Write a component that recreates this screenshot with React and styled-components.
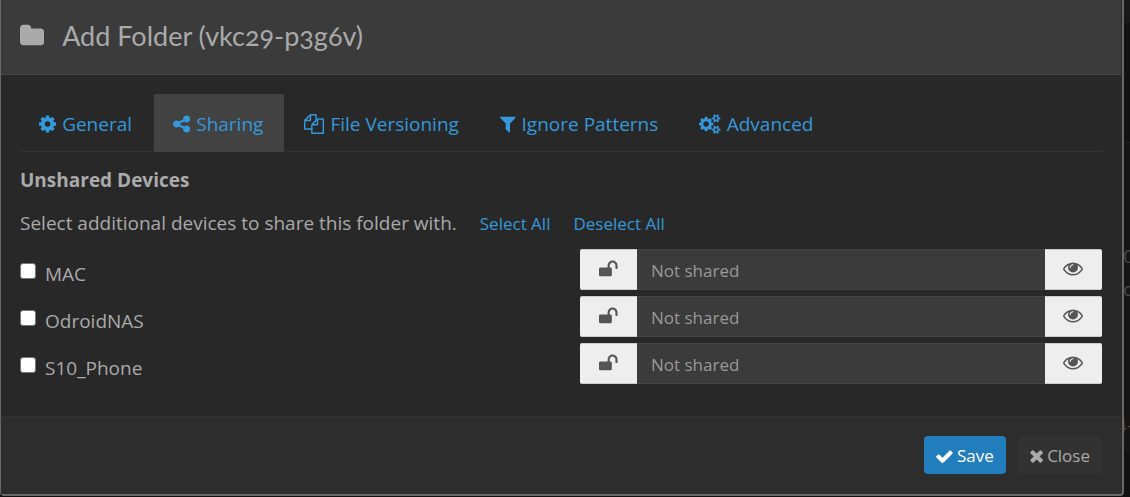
import React from 'react';
import styled, { createGlobalStyle } from 'styled-components';

const GlobalStyle = createGlobalStyle`
  * { box-sizing: border-box; }
  body {
    margin: 0;
    background: #111111;
    color: #aaaaaa;
    font-family: "Open Sans", "Liberation Sans", sans-serif;
    font-size: 19px;
    line-height: 28px;
  }
  button, input { font: inherit; }
`;

const Page = styled.div`
  position: relative;
  overflow: hidden;
  padding-right: 6px;
  padding-bottom: 1px;
`;

const Backdrop = styled.div`
  position: absolute;
  inset: 0;
  overflow: hidden;
  color: #4a4743;
`;

const BackdropPanel = styled.div`
  position: absolute;
  left: 0;
  right: 0;
  top: ${(p) => p.$top}px;
  height: ${(p) => p.$height}px;
  border-top: 1px solid #222222;
  background: ${(p) => p.$tone};
`;

const BackdropText = styled.span`
  position: absolute;
  top: ${(p) => p.$top}px;
  right: ${(p) => p.$right}px;
`;

const Dialog = styled.section`
  position: relative;
  border: solid #69676a;
  border-width: 0 2px 2px 1px;
  border-radius: 0 0 4px 4px;
  background: #282828;
`;

const Header = styled.header`
  display: flex;
  align-items: center;
  gap: 18px;
  height: 75px;
  margin-right: 1px;
  padding: 0 19px 3px;
  border-bottom: 1px solid #484848;
  background: #3b3b3b;
`;

const Title = styled.h1`
  margin: 0;
  font-family: Lato, sans-serif;
  font-feature-settings: "onum";
  font-weight: 400;
  font-size: 27px;
  line-height: 32px;
`;

const Body = styled.div`
  padding: 19px 20px 26px 19px;
`;

const Tabs = styled.nav`
  display: flex;
  gap: 1px;
  border-bottom: 1px solid #333333;
`;

const Tab = styled.a`
  display: flex;
  align-items: center;
  gap: 6px;
  height: ${(p) => (p.$active ? '58px' : '57px')};
  margin-bottom: ${(p) => (p.$active ? '-1px' : '0')};
  padding: 2px 21px 0 19px;
  border-radius: 2px 2px 0 0;
  background: ${(p) => (p.$active ? '#424242' : 'transparent')};
  color: #3498db;
  text-decoration: none;
  white-space: nowrap;
`;

const SectionTitle = styled.h2`
  margin: 14px 0 15px;
  font-size: 19px;
  line-height: 28px;
  font-weight: 700;
`;

const Hint = styled.p`
  display: flex;
  align-items: center;
  margin: 0 0 12px;
`;

const TextButton = styled.button`
  margin-left: 23px;
  padding: 2px 0 0;
  border: 0;
  background: none;
  color: #3498db;
  font-size: 17px;
  line-height: 26px;
`;

const DeviceRow = styled.div`
  display: grid;
  grid-template-columns: minmax(0, 560fr) minmax(0, 522fr);
  align-items: center;
  margin-bottom: 6px;
`;

const DeviceLabel = styled.label`
  display: flex;
  align-items: center;
  gap: 9px;
  padding-top: 8px;
`;

const Checkbox = styled.input`
  appearance: none;
  width: 16px;
  height: 16px;
  margin: 0 0 6px;
  border: 1px solid #767676;
  border-radius: 3px;
  background: #ffffff;
`;

const Group = styled.div`
  display: flex;
  height: 41px;
`;

const Addon = styled.button`
  display: flex;
  align-items: center;
  justify-content: center;
  flex: 0 0 57px;
  padding: 0 ${(p) => (p.$end ? '2px' : '0')} 2px 0;
  border: solid #cccccc;
  border-width: 1px 0;
  border-radius: ${(p) => (p.$end ? '0 2px 2px 0' : '2px 0 0 2px')};
  background: #eeeeee;
  color: #555555;
`;

const Password = styled.input`
  flex: 1;
  min-width: 0;
  padding: 2px 14px 0;
  border: 1px solid #444444;
  border-width: 1px 0;
  border-radius: 0;
  background: #3b3b3b;
  color: #aaaaaa;
  font-size: 17px;
  &::placeholder { color: #999999; opacity: 1; }
`;

const Footer = styled.footer`
  display: flex;
  justify-content: flex-end;
  gap: 12px;
  margin-right: 1px;
  padding: 19px 19px 20px;
  border-top: 1px solid #333333;
  background: #2d2d2d;
`;

const Button = styled.button`
  display: flex;
  align-items: center;
  gap: 4px;
  height: 38px;
  padding: 2px 12px 0;
  border: 0;
  border-radius: 4px;
  background: ${(p) => (p.$primary ? '#217dbb' : '#323232')};
  color: ${(p) => (p.$primary ? '#ffffff' : '#aaaaaa')};
  font-size: 17px;
`;

const Svg = styled.svg`
  display: block;
  flex: none;
  height: ${(p) => p.$size}px;
  fill: currentColor;
`;

const icons = {
  folder: ['64 0 1664 1792', 'M1728 608v704q0 92-66 158t-158 66h-1216q-92 0-158-66t-66-158v-960q0-92 66-158t158-66h320q92 0 158 66t66 158v32h672q92 0 158 66t66 158z'],
  cog: ['128 0 1536 1792', 'M1152 896q0-106-75-181t-181-75-181 75-75 181 75 181 181 75 181-75 75-181zm512-109v222q0 12-8 23t-20 13l-185 28q-19 54-39 91 35 50 107 138 10 12 10 25t-9 23q-27 37-99 108t-94 71q-12 0-26-9l-138-108q-44 23-91 38-16 136-29 186-7 28-36 28h-222q-14 0-24.5-8.5t-11.5-21.5l-28-184q-49-16-90-37l-141 107q-10 9-25 9-14 0-25-11-126-114-165-168-7-10-7-23 0-12 8-23 15-21 51-66.5t54-70.5q-27-50-41-99l-183-27q-13-2-21-12.5t-8-23.5v-222q0-12 8-23t19-13l186-28q14-46 39-92-40-57-107-138-10-12-10-24 0-10 9-23 26-36 98.5-107.5t94.5-71.5q13 0 26 10l138 107q44-23 91-38 16-136 29-186 7-28 36-28h222q14 0 24.5 8.5t11.5 21.5l28 184q49 16 90 37l142-107q9-9 24-9 13 0 25 10 129 119 165 170 7 8 7 22 0 12-8 23-15 21-51 66.5t-54 70.5q26 50 41 98l183 28q13 2 21 12.5t8 23.5z'],
  share: ['128 0 1536 1792', 'M1344 1024q133 0 226.5 93.5t93.5 226.5-93.5 226.5-226.5 93.5-226.5-93.5-93.5-226.5q0-12 2-34l-360-180q-92 86-218 86-133 0-226.5-93.5t-93.5-226.5 93.5-226.5 226.5-93.5q126 0 218 86l360-180q-2-22-2-34 0-133 93.5-226.5t226.5-93.5 226.5 93.5 93.5 226.5-93.5 226.5-226.5 93.5q-126 0-218-86l-360 180q2 22 2 34t-2 34l360 180q92-86 218-86z'],
  files: ['0 0 1792 1792', 'M1696 384q40 0 68 28t28 68v1216q0 40-28 68t-68 28h-960q-40 0-68-28t-28-68v-288h-544q-40 0-68-28t-28-68v-672q0-40 20-88t48-76l408-408q28-28 76-48t88-20h416q40 0 68 28t28 68v328q68-40 128-40h416zm-544 213l-299 299h299v-299zm-640-384l-299 299h299v-299zm196 647l316-316v-416h-384v416q0 40-28 68t-68 28h-416v640h512v-256q0-40 20-88t48-76zm956 804v-1152h-384v416q0 40-28 68t-68 28h-416v640h896z'],
  filter: ['192 0 1408 1792', 'M1595 295q17 41-14 70l-493 493v742q0 42-39 59-13 5-25 5-27 0-45-19l-256-256q-19-19-19-45v-486l-493-493q-31-29-14-70 17-39 59-39h1280q42 0 59 39z'],
  cogs: ['-64 0 1920 1792', 'M832 896q0-106-75-181t-181-75-181 75-75 181 75 181 181 75 181-75 75-181zm768 512q0-52-38-90t-90-38-90 38-38 90q0 53 37.5 90.5t90.5 37.5 90.5-37.5 37.5-90.5zm0-1024q0-52-38-90t-90-38-90 38-38 90q0 53 37.5 90.5t90.5 37.5 90.5-37.5 37.5-90.5zm-384 421v185q0 10-7 19.5t-16 10.5l-155 24q-11 35-32 76 34 48 90 115 7 11 7 20 0 12-7 19-23 30-82.5 89.5t-78.5 59.5q-11 0-21-7l-115-90q-37 19-77 31-11 108-23 155-7 24-30 24h-186q-11 0-20-7.5t-10-17.5l-23-153q-34-10-75-31l-118 89q-7 7-20 7-11 0-21-8-144-133-144-160 0-9 7-19 10-14 41-53t47-61q-23-44-35-82l-152-24q-10-1-17-9.5t-7-19.5v-185q0-10 7-19.5t16-10.5l155-24q11-35 32-76-34-48-90-115-7-11-7-20 0-12 7-20 22-30 82-89t79-59q11 0 21 7l115 90q34-18 77-32 11-108 23-154 7-24 30-24h186q11 0 20 7.5t10 17.5l23 153q34 10 75 31l118-89q8-7 20-7 11 0 21 8 144 133 144 160 0 8-7 19-12 16-42 54t-45 60q23 48 34 82l152 23q10 2 17 10.5t7 19.5zm640 533v140q0 16-149 31-12 27-30 52 51 113 51 138 0 4-4 7-122 71-124 71-8 0-46-47t-52-68q-20 2-30 2t-30-2q-14 21-52 68t-46 47q-2 0-124-71-4-3-4-7 0-25 51-138-18-25-30-52-149-15-149-31v-140q0-16 149-31 13-29 30-52-51-113-51-138 0-4 4-7 4-2 35-20t59-34 30-16q8 0 46 46.5t52 67.5q20-2 30-2t30 2q51-71 92-112l6-2q4 0 124 70 4 3 4 7 0 25-51 138 17 23 30 52 149 15 149 31zm0-1024v140q0 16-149 31-12 27-30 52 51 113 51 138 0 4-4 7-122 71-124 71-8 0-46-47t-52-68q-20 2-30 2t-30-2q-14 21-52 68t-46 47q-2 0-124-71-4-3-4-7 0-25 51-138-18-25-30-52-149-15-149-31v-140q0-16 149-31 13-29 30-52-51-113-51-138 0-4 4-7 4-2 35-20t59-34 30-16q8 0 46 46.5t52 67.5q20-2 30-2t30 2q51-71 92-112l6-2q4 0 124 70 4 3 4 7 0 25-51 138 17 23 30 52 149 15 149 31z'],
  unlock: ['64 0 1664 1792', 'M1728 576v256q0 26-19 45t-45 19h-64q-26 0-45-19t-19-45v-256q0-106-75-181t-181-75-181 75-75 181v192h96q40 0 68 28t28 68v576q0 40-28 68t-68 28h-960q-40 0-68-28t-28-68v-576q0-40 28-68t68-28h672v-192q0-185 131.5-316.5t316.5-131.5 316.5 131.5 131.5 316.5z'],
  eye: ['0 64 1792 1792', 'M1664 960q-152-236-381-353 61 104 61 225 0 185-131.5 316.5t-316.5 131.5-316.5-131.5-131.5-316.5q0-121 61-225-229 117-381 353 133 205 333.5 326.5t434.5 121.5 434.5-121.5 333.5-326.5zm-720-384q0-20-14-34t-34-14q-125 0-214.5 89.5t-89.5 214.5q0 20 14 34t34 14 34-14 14-34q0-86 61-147t147-61q20 0 34-14t14-34zm848 384q0 34-20 69-140 230-376.5 368.5t-499.5 138.5-499.5-139-376.5-368q-20-35-20-69t20-69q140-229 376.5-368t499.5-139 499.5 139 376.5 368q20 35 20 69z'],
  check: ['100 0 1600 1792', 'M1671 566q0 40-28 68l-724 724-136 136q-28 28-68 28t-68-28l-136-136-362-362q-28-28-28-68t28-68l136-136q28-28 68-28t68 28l294 295 656-657q28-28 68-28t68 28l136 136q28 28 28 68z'],
  times: ['270 64 1256 1792', 'M1490 1322q0 40-28 68l-136 136q-28 28-68 28t-68-28l-294-294-294 294q-28 28-68 28t-68-28l-136-136q-28-28-28-68t28-68l294-294-294-294q-28-28-28-68t28-68l136-136q28-28 68-28t68 28l294 294 294-294q28-28 68-28t68 28l136 136q28 28 28 68t-28 68l-294 294 294 294q28 28 28 68z'],
};

function Icon({ name, size = 20 }) {
  const [viewBox, d] = icons[name];
  return (
    <Svg viewBox={viewBox} $size={size} aria-hidden="true">
      <path d={d} />
    </Svg>
  );
}

const tabs = [
  { icon: 'cog', label: 'General' },
  { icon: 'share', label: 'Sharing', active: true },
  { icon: 'files', label: 'File Versioning' },
  { icon: 'filter', label: 'Ignore Patterns' },
  { icon: 'cogs', label: 'Advanced' },
];

const devices = ['MAC', 'OdroidNAS', 'S10_Phone'];

export default function App() {
  return (
    <Page>
      <GlobalStyle />
      <Backdrop aria-hidden="true">
        <BackdropPanel $top={-1} $height={24} $tone="#191919" />
        <BackdropPanel $top={142} $height={309} $tone="#151515" />
        <BackdropText $top={242} $right={-4}>0</BackdropText>
        <BackdropText $top={275} $right={-2}>oc</BackdropText>
        <BackdropText $top={411} $right={-3}>4-</BackdropText>
      </Backdrop>
      <Dialog role="dialog" aria-labelledby="dialog-title">
        <Header>
          <Icon name="folder" size={26} />
          <Title id="dialog-title">Add Folder (vkc29-p3g6v)</Title>
        </Header>
        <Body>
          <Tabs>
            {tabs.map((t) => (
              <Tab key={t.label} href="#" $active={t.active} aria-current={t.active ? 'page' : undefined}>
                <Icon name={t.icon} />
                {t.label}
              </Tab>
            ))}
          </Tabs>
          <SectionTitle>Unshared Devices</SectionTitle>
          <Hint>
            Select additional devices to share this folder with.
            <TextButton type="button">Select All</TextButton>
            <TextButton type="button">Deselect All</TextButton>
          </Hint>
          {devices.map((name) => (
            <DeviceRow key={name}>
              <DeviceLabel>
                <Checkbox type="checkbox" />
                {name}
              </DeviceLabel>
              <Group>
                <Addon type="button" aria-label="Encryption"><Icon name="unlock" /></Addon>
                <Password type="text" placeholder="Not shared" aria-label={`Encryption password for ${name}`} />
                <Addon type="button" $end aria-label="Show password"><Icon name="eye" /></Addon>
              </Group>
            </DeviceRow>
          ))}
        </Body>
        <Footer>
          <Button type="button" $primary><Icon name="check" size={19} />Save</Button>
          <Button type="button"><Icon name="times" size={19} />Close</Button>
        </Footer>
      </Dialog>
    </Page>
  );
}
